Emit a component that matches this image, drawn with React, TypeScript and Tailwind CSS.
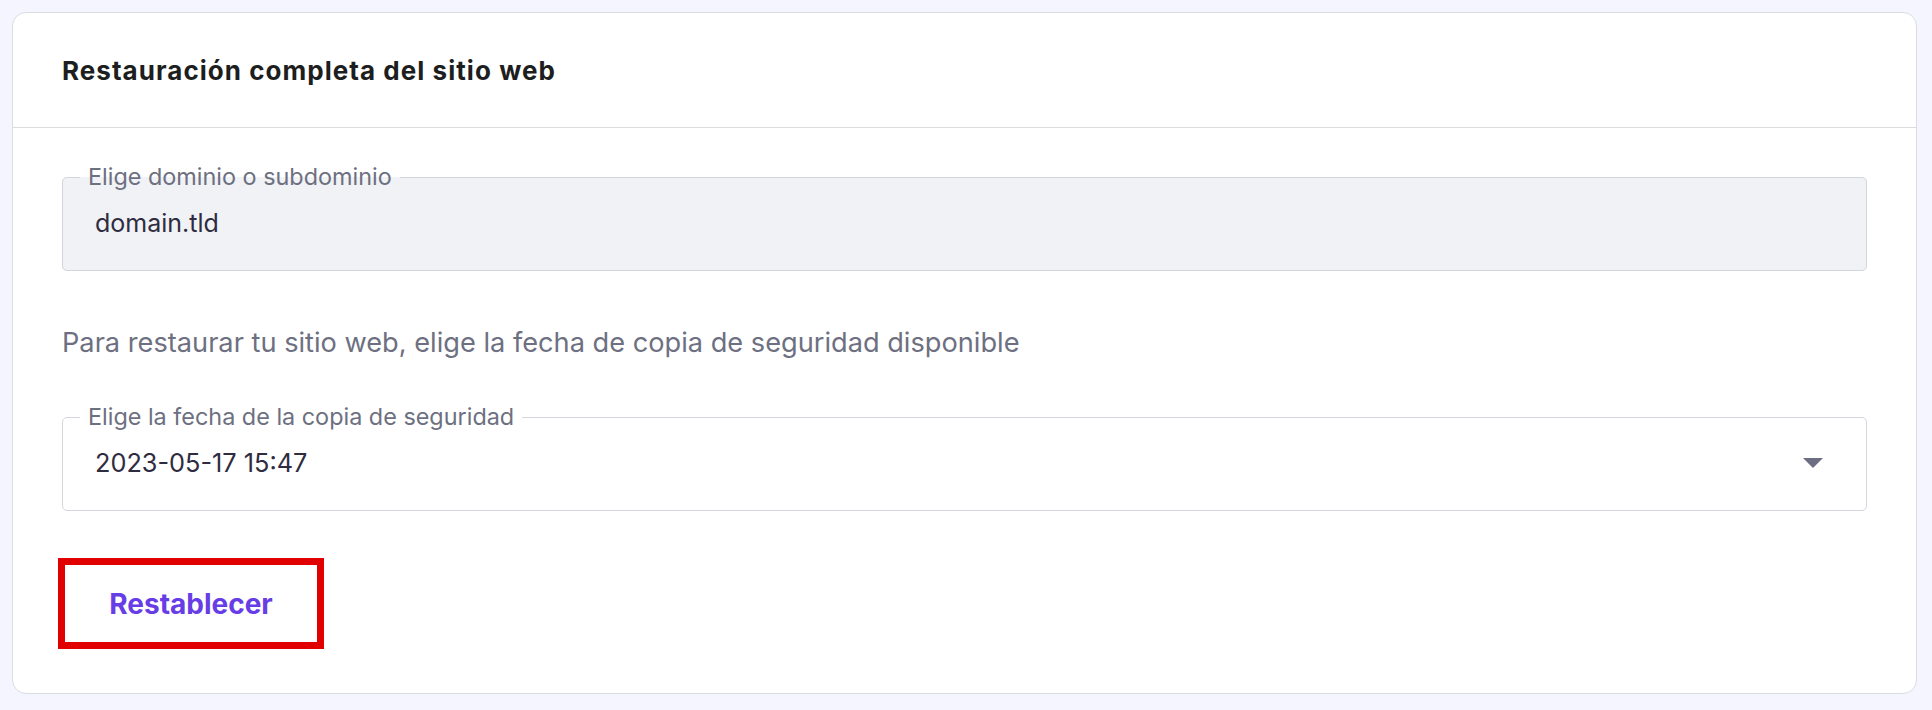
export default function App() {
  return (
    <div className="min-h-screen bg-[#f4f5ff] pl-3 pr-[15px] pt-3 pb-4 font-['Inter',sans-serif]">
      <div className="rounded-[14px] border border-[#dadce0] bg-white">
        <div className="flex h-[115px] items-center border-b border-[#dadce0] px-[49px]">
          <h2 className="text-[26px] font-bold tracking-[0.04em] text-[#1d1e20]">Restauración completa del sitio web</h2>
        </div>

        <div className="px-[49px] pt-[35px] pb-[44px]">
          <fieldset className="rounded-[5px] border border-[#d4d6dd] bg-[#f1f2f6] pl-[17px] pr-4 pb-[29px]">
            <legend className="px-2 text-[23.4px] leading-7 text-[#6d7081]">Elige dominio o subdominio</legend>
            <div className="pl-[15px] pt-[14px] text-[25px] leading-[36px] text-[#2f2c3f]">domain.tld</div>
          </fieldset>

          <p className="mt-[54px] text-[27.2px] leading-9 text-[#6d7081]">
            Para restaurar tu sitio web, elige la fecha de copia de seguridad disponible
          </p>

          <fieldset className="mt-[42px] rounded-[5px] border border-[#d4d6dd] bg-white pl-[17px] pr-4 pb-[29px]">
            <legend className="px-2 text-[23.4px] leading-7 text-[#6d7081]">Elige la fecha de la copia de seguridad</legend>
            <div className="flex items-center justify-between pt-[14px]">
              <span className="pl-[15px] text-[25.3px] leading-[36px] text-[#2f2c3f]">2023-05-17 15:47</span>
              <svg width="20" height="10" viewBox="0 0 20 10" className="mr-[27px]">
                <path d="M0 0 L20 0 L10 10 Z" fill="#6d6d83" />
              </svg>
            </div>
          </fieldset>

          <button className="-ml-1 mt-[47px] flex h-[91px] w-[266px] items-center justify-center border-[7px] border-[#e10000] text-[28px] font-bold text-[#673de6]">
            Restablecer
          </button>
        </div>
      </div>
    </div>
  );
}
